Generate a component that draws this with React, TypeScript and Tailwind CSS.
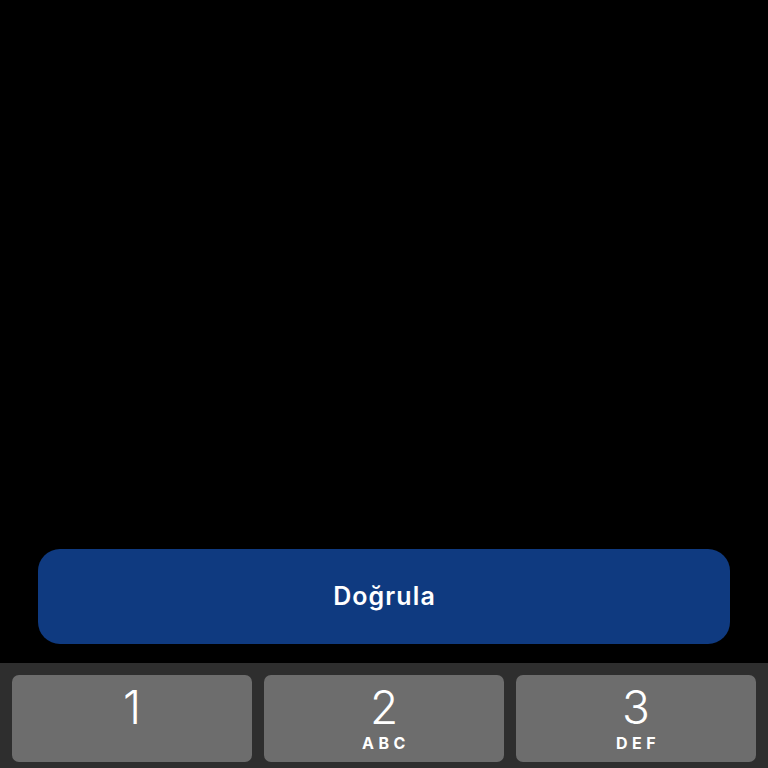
import React from 'react';

const keys = [
  { digit: '1', letters: '' },
  { digit: '2', letters: 'ABC' },
  { digit: '3', letters: 'DEF' },
];

const App = () => {
  return (
    <div className="flex h-screen flex-col overflow-hidden bg-black" style={{ fontFamily: 'Inter, "Noto Sans", sans-serif' }}>
      <div className="flex-1" />

      <div className="mx-[38px] mb-[19px]">
        <button className="flex h-[95px] w-full items-center justify-center rounded-[22px] bg-[#0f3a80] pl-[1px] text-[25px] font-semibold tracking-[1.1px] text-white">
          Doğrula
        </button>
      </div>

      <div className="grid grid-cols-3 gap-3 bg-[#2e2e2e] px-3 pb-[6px] pt-3">
        {keys.map((key) => (
          <div key={key.digit} className="flex h-[87px] flex-col items-center rounded-[7px] bg-[#6d6d6d] text-white">
            <span className="mt-[7px] text-[46px] font-light leading-[50px]">{key.digit}</span>
            {key.letters && (
              <span className="mt-[3px] pl-[4px] text-[16px] font-bold leading-none tracking-[4.5px]">{key.letters}</span>
            )}
          </div>
        ))}
      </div>
    </div>
  );
};

export default App;
